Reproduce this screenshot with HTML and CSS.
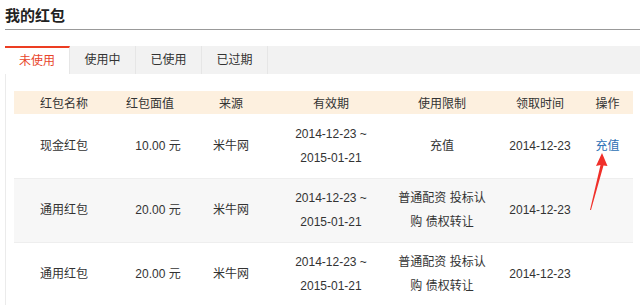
FILE: index.html
```html
<!DOCTYPE html>
<html lang="zh-CN">
<head>
<meta charset="utf-8">
<title>我的红包</title>
<link rel="stylesheet" href="styles.css">
</head>
<body>
<div class="page">
  <h1 class="title">我的红包</h1>
  <div class="tabs">
    <div class="tab active">未使用</div>
    <div class="tab">使用中</div>
    <div class="tab">已使用</div>
    <div class="tab">已过期</div>
  </div>
  <div class="panel">
    <table class="grid">
      <colgroup>
        <col class="c1"><col class="c2"><col class="c3"><col class="c4"><col class="c5"><col class="c6"><col class="c7">
      </colgroup>
      <thead>
        <tr><th>红包名称</th><th>红包面值</th><th>来源</th><th>有效期</th><th>使用限制</th><th>领取时间</th><th>操作</th></tr>
      </thead>
      <tbody>
        <tr>
          <td>现金红包</td><td class="amt">10.00 元</td><td>米牛网</td>
          <td>2014-12-23 ~<br>2015-01-21</td><td class="limit">充值</td><td>2014-12-23</td>
          <td><a class="op" href="#">充值</a></td>
        </tr>
        <tr class="alt">
          <td>通用红包</td><td class="amt">20.00 元</td><td>米牛网</td>
          <td>2014-12-23 ~<br>2015-01-21</td><td class="limit">普通配资&nbsp;投标认购&nbsp;债权转让</td><td>2014-12-23</td>
          <td></td>
        </tr>
        <tr>
          <td>通用红包</td><td class="amt">20.00 元</td><td>米牛网</td>
          <td>2014-12-23 ~<br>2015-01-21</td><td class="limit">普通配资&nbsp;投标认购&nbsp;债权转让</td><td>2014-12-23</td>
          <td></td>
        </tr>
      </tbody>
    </table>
  </div>
  <svg class="arrow" width="24" height="60" viewBox="0 0 24 60">
    <polygon points="15,1 20.5,14 16.5,13.5 4,58 3,58 13.5,13 9,14" fill="#f0302a"/>
  </svg>
</div>
</body>
</html>
```

FILE: styles.css
```css
* { box-sizing: border-box; }
html, body { margin: 0; padding: 0; background: #fff; }
body {
  font-family: "Liberation Sans", "Noto Sans CJK SC", sans-serif;
  font-size: 12px;
  color: #333;
}
.page { position: relative; padding-left: 5px; height: 305px; overflow: hidden; }
.title {
  margin: 0;
  height: 30px;
  padding-top: 7px;
  font-size: 15px;
  font-weight: bold;
  line-height: 18px;
  color: #222;
  border-bottom: 1px solid #999;
}
.tabs {
  margin-top: 16px;
  display: flex;
  height: 28px;
  background: #f2f2f2;
}
.tab {
  width: 66px;
  line-height: 28px;
  text-align: center;
  color: #333;
  border-right: 1px solid #e6e6e6;
}
.tab.active {
  width: 65px;
  background: #fff;
  color: #e8452c;
  border-top: 2px solid #ec3d22;
  line-height: 26px;
}
.panel {
  border-left: 1px solid #ebebeb;
  padding: 17px 0 0 8px;
  height: 240px;
}
.grid {
  border-collapse: collapse;
  table-layout: fixed;
  width: 619px;
}
.c1 { width: 100px; }
.c2 { width: 72px; }
.c3 { width: 90px; }
.c4 { width: 110px; }
.c5 { width: 112px; }
.c6 { width: 84px; }
.c7 { width: 51px; }
.grid th {
  background: #fdf0df;
  height: 23px;
  font-weight: normal;
  text-align: center;
  padding: 0;
}
.grid td {
  height: 64px;
  text-align: center;
  line-height: 24px;
  padding: 0;
  border-bottom: 1px solid #eeeeee;
}
.grid tr.alt td { background: #f7f7f7; }
.grid td.amt { padding-left: 16px; }
.grid td.limit { padding: 0 9px; }
.op { color: #2c6fb5; text-decoration: none; }
.arrow { position: absolute; left: 587px; top: 152px; }
```
